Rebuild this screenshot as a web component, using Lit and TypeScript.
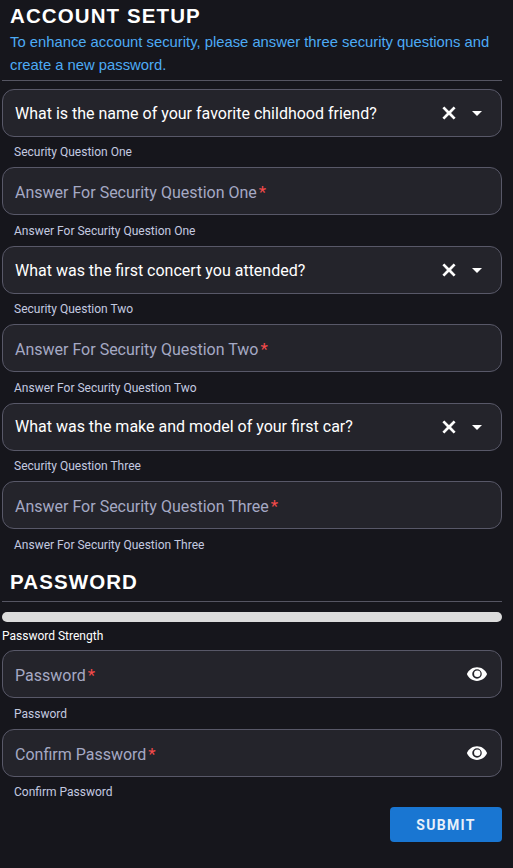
import { LitElement, html, css, svg } from "lit";
import { customElement } from "lit/decorators.js";

const clear = svg`<path d="M19 6.41 17.59 5 12 10.59 6.41 5 5 6.41 10.59 12 5 17.59 6.41 19 12 13.41 17.59 19 19 17.59 13.41 12z"/>`;
const arrow = svg`<path d="M7 10l5 5 5-5z"/>`;
const eye = svg`<path fill-rule="evenodd" d="M12 4.5C7 4.5 2.73 7.61 1 12c1.73 4.39 6 7.5 11 7.5s9.27-3.11 11-7.5c-1.73-4.39-6-7.5-11-7.5zM12 17.2a5.2 5.2 0 1 1 0-10.4 5.2 5.2 0 0 1 0 10.4z"/><circle cx="12.3" cy="11.8" r="3.5"/>`;

@customElement("app-root")
export class AppRoot extends LitElement {
  static styles = css`
    :host { display: block; width: 513px; height: 868px; background: #16161c; overflow: hidden; font-family: Roboto, sans-serif; color: #fff; box-sizing: border-box; padding: 0 11px 0 2px; }
    * { box-sizing: border-box; }
    h1, h2 { margin: 0; padding-left: 8px; font: 700 20.5px/24px "Liberation Sans", Arial, sans-serif; letter-spacing: 1.1px; color: #fff; }
    h1 { padding-top: 4px; }
    p { margin: 0; padding: 3px 0 0 8px; font: 400 14.8px/23px "Liberation Sans", sans-serif; color: #4dabf5; height: 52px; }
    .rule { height: 1px; background: #555562; }
    .list { display: flex; flex-direction: column; padding-top: 7.7px; }
    .item { height: 78.47px; }
    .field { height: 48px; border: 1px solid #585868; border-radius: 12px; background: #24242b; display: flex; align-items: center; padding: 0 12px; font-size: 16px; line-height: 20px; }
    .value, .ph { flex: 1; white-space: nowrap; }
    .value { color: #fff; padding-top: 1.8px; }
    .ph { color: #a5a9c4; padding-top: 3.4px; }
    .ph b { font-weight: 400; font-size: 17px; line-height: 0; color: #f44a4a; margin-left: 2px; }
    svg { fill: #fff; display: block; flex: none; }
    .x { width: 20px; height: 20px; margin-right: 6px; stroke: #fff; stroke-width: 1.3px; }
    .a { width: 24px; height: 24px; margin-right: 0; }
    .eye { width: 22px; height: 22px; margin-right: 1px; }
    .help { padding: 7.6px 0 0 12px; font-size: 12px; line-height: 16px; color: #c4cae0; }
    .pw { padding-top: 10.5px; }
    .pw h2 { height: 31px; }
    .bar { height: 10px; border-radius: 5px; background: #dcdcdc; margin-top: 10px; }
    .strength { font-size: 12px; line-height: 16px; color: #fff; padding-top: 6px; height: 28.4px; }
    .actions { display: flex; justify-content: flex-end; }
    button { width: 112px; height: 35px; border: 0; border-radius: 4px; background: #1976d2; color: #e8f0fa; font: 700 14px Roboto, sans-serif; letter-spacing: 1.3px; }
  `;

  private select(q: string, help: string) {
    return html`<div class="item">
      <div class="field">
        <span class="value">${q}</span>
        <svg class="x" viewBox="0 0 24 24">${clear}</svg>
        <svg class="a" viewBox="0 0 24 24">${arrow}</svg>
      </div>
      <div class="help">${help}</div>
    </div>`;
  }

  private input(label: string, icon = false) {
    return html`<div class="item">
      <div class="field">
        <span class="ph">${label}<b>*</b></span>
        ${icon ? html`<svg class="eye" viewBox="0 0 24 24">${eye}</svg>` : ""}
      </div>
      <div class="help">${label}</div>
    </div>`;
  }

  render() {
    return html`
      <h1>ACCOUNT SETUP</h1>
      <p>To enhance account security, please answer three security questions and create a new password.</p>
      <div class="rule"></div>
      <div class="list">
        ${this.select("What is the name of your favorite childhood friend?", "Security Question One")}
        ${this.input("Answer For Security Question One")}
        ${this.select("What was the first concert you attended?", "Security Question Two")}
        ${this.input("Answer For Security Question Two")}
        ${this.select("What was the make and model of your first car?", "Security Question Three")}
        ${this.input("Answer For Security Question Three")}
      </div>
      <div class="pw">
        <h2>PASSWORD</h2>
        <div class="rule"></div>
        <div class="bar"></div>
        <div class="strength">Password Strength</div>
        ${this.input("Password", true)}
        ${this.input("Confirm Password", true)}
      </div>
      <div class="actions"><button>SUBMIT</button></div>
    `;
  }
}
